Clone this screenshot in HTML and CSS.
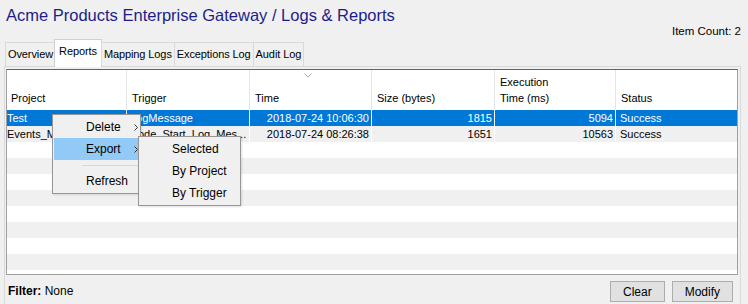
FILE: index.html
```html
<!doctype html>
<html lang="en">
<head>
  <meta charset="utf-8"/>
  <title>Logs &amp; Reports</title>
  <link rel="stylesheet" href="styles.css">
</head>
<body>
<h1 class="title">Acme Products Enterprise Gateway / Logs &amp; Reports</h1>
<div class="count-row">Item Count: 2</div>

<div class="tabs">
  <div class="tab">Overview</div>
  <div class="tab active">Reports</div>
  <div class="tab">Mapping Logs</div>
  <div class="tab">Exceptions Log</div>
  <div class="tab">Audit Log</div>
</div>

<div class="panel">
  <div class="grid">
    <div class="grid-head">
      <div class="hcell"><span>Project</span></div>
      <div class="hcell"><span>Trigger</span></div>
      <div class="hcell sorted">
        <svg class="sort" width="8" height="5" viewBox="0 0 8 5"><path d="M0.5 0.5 L4 4 L7.5 0.5" fill="none" stroke="#a8a8a8" stroke-width="1"/></svg>
        <span>Time</span>
      </div>
      <div class="hcell"><span>Size (bytes)</span></div>
      <div class="hcell"><span>Execution<br>Time (ms)</span></div>
      <div class="hcell last"><span>Status</span></div>
    </div>
    <div class="grid-body">
      <div class="row selected">
        <div class="cell c-project">Test</div>
        <div class="cell c-trigger">LogMessage</div>
        <div class="cell num">2018-07-24 10:06:30</div>
        <div class="cell num">1815</div>
        <div class="cell num">5094</div>
        <div class="cell c-status">Success</div>
      </div>
      <div class="row alt">
        <div class="cell c-project">Events_M</div>
        <div class="cell c-trigger">Node_Start_Log_Mes...</div>
        <div class="cell num">2018-07-24 08:26:38</div>
        <div class="cell num">1651</div>
        <div class="cell num">10563</div>
        <div class="cell c-status">Success</div>
      </div>
      <div class="row empty"></div>
      <div class="row empty alt"></div>
      <div class="row empty"></div>
      <div class="row empty alt"></div>
      <div class="row empty"></div>
      <div class="row empty alt"></div>
      <div class="row empty"></div>
      <div class="row empty alt"></div>
    </div>
  </div>

  <div class="filter-bar">
    <span class="filter"><b>Filter:</b> None</span>
    <div class="actions">
      <button>Clear</button>
      <button>Modify</button>
    </div>
  </div>
</div>

<!-- context menu opened on the selected row -->
<div class="menu main-menu">
  <div class="item">Delete <svg class="arrow" width="4" height="7" viewBox="0 0 4 7"><path d="M0.5 0.5 L3.5 3.5 L0.5 6.5" fill="none" stroke="#333" stroke-width="1"/></svg></div>
  <div class="item hover">Export <svg class="arrow" width="4" height="7" viewBox="0 0 4 7"><path d="M0.5 0.5 L3.5 3.5 L0.5 6.5" fill="none" stroke="#333" stroke-width="1"/></svg></div>
  <div class="sep"></div>
  <div class="item">Refresh</div>
</div>
<div class="menu sub-menu">
  <div class="item">Selected</div>
  <div class="item">By Project</div>
  <div class="item">By Trigger</div>
</div>
</body>
</html>
```

FILE: styles.css
```css
:root{
  --bg:#f0f0f0;--border:#d9d9d9;--select:#0078d7;--hover:#91c9f7;--navy:#1d1d8a;
}
html,body{margin:0;height:304px;overflow:hidden}
body{background:var(--bg);font-family:'Liberation Sans',Arial,sans-serif;color:#000;font-size:11px}

.title{margin:0;padding:4px 6px 0;font-size:16.5px;font-weight:400;line-height:22px;color:var(--navy)}
.count-row{margin-top:-1px;height:13px;line-height:13px;font-size:11.5px;text-align:right;padding-right:7px}

.tabs{display:flex;align-items:flex-end;margin-top:1px;padding-left:5px;height:27px;position:relative;z-index:2}
.tab{height:24px;box-sizing:border-box;padding:0 2px;line-height:22px;border:1px solid var(--border);
  border-bottom:none;margin-right:-1px;background:var(--bg);white-space:nowrap;letter-spacing:-.1px}
.tab.active{height:28px;margin:0 -1px 0 -1px;padding:0 4px;background:#fff;line-height:23px;
  margin-bottom:-1px;border-color:#d0d0d0}

.panel{margin-left:4px;width:737px;box-sizing:border-box;height:240px;border:1px solid var(--border);
  border-bottom:none;padding:2px 2px 0 1px;background:var(--bg)}

.grid{background:#fff;border:1px solid #a0a0a0;border-top-color:#646464}
.grid-head,.row{display:grid;grid-template-columns:120px 123px 122px 123px 121px 121px}
.grid-head{height:40px}
.hcell{display:flex;flex-direction:column;justify-content:flex-end;padding:0 0 4px 4px;
  line-height:16px;border-right:1px solid #e5e5e5}
.hcell + .hcell{padding-left:5px}
.hcell.last{border-right:none}
.hcell.sorted{justify-content:space-between}
.sort{align-self:center;margin:3px 0 0 -10px}

.grid-body{height:164px}
.row{height:16px;line-height:16px}
.row.alt{background:var(--bg)}
.row.selected{background:var(--select);color:#fff}
.row.empty{display:block}
.cell{padding:0 2px;border-right:1px solid #fff;white-space:nowrap;overflow:hidden}
.cell:last-child{border-right:none}
.c-project{padding-left:0}
.c-trigger{padding-left:3px}
.c-status{padding-left:4px}
.num{text-align:right}

.filter-bar{display:flex;justify-content:space-between;align-items:flex-start;padding:6px 5px 0 2px;font-size:12px}
.filter{line-height:18px;margin-top:1px}
.actions{display:flex;gap:7px}
button{height:21px;padding:0 12px;border:1px solid #adadad;background:#e1e1e1;
  font:12px 'Liberation Sans',Arial,sans-serif;color:#000}

.menu{position:absolute;z-index:5;background:var(--bg);border:1px solid #979797;padding:1px;
  box-sizing:border-box;font-size:12px;box-shadow:1px 1px 2px rgba(0,0,0,.12)}
.main-menu{left:52px;top:114px;width:89px}
.sub-menu{left:138px;top:136px;width:103px}
.item{height:22px;line-height:22px;padding-left:32px;display:flex;align-items:center;justify-content:space-between}
.item.hover{background:var(--hover)}
.arrow{margin-right:1px}
.sep{height:10px;display:flex;align-items:center;padding-left:28px}
.sep::after{content:"";flex:1;border-top:1px solid #d7d7d7}
```
